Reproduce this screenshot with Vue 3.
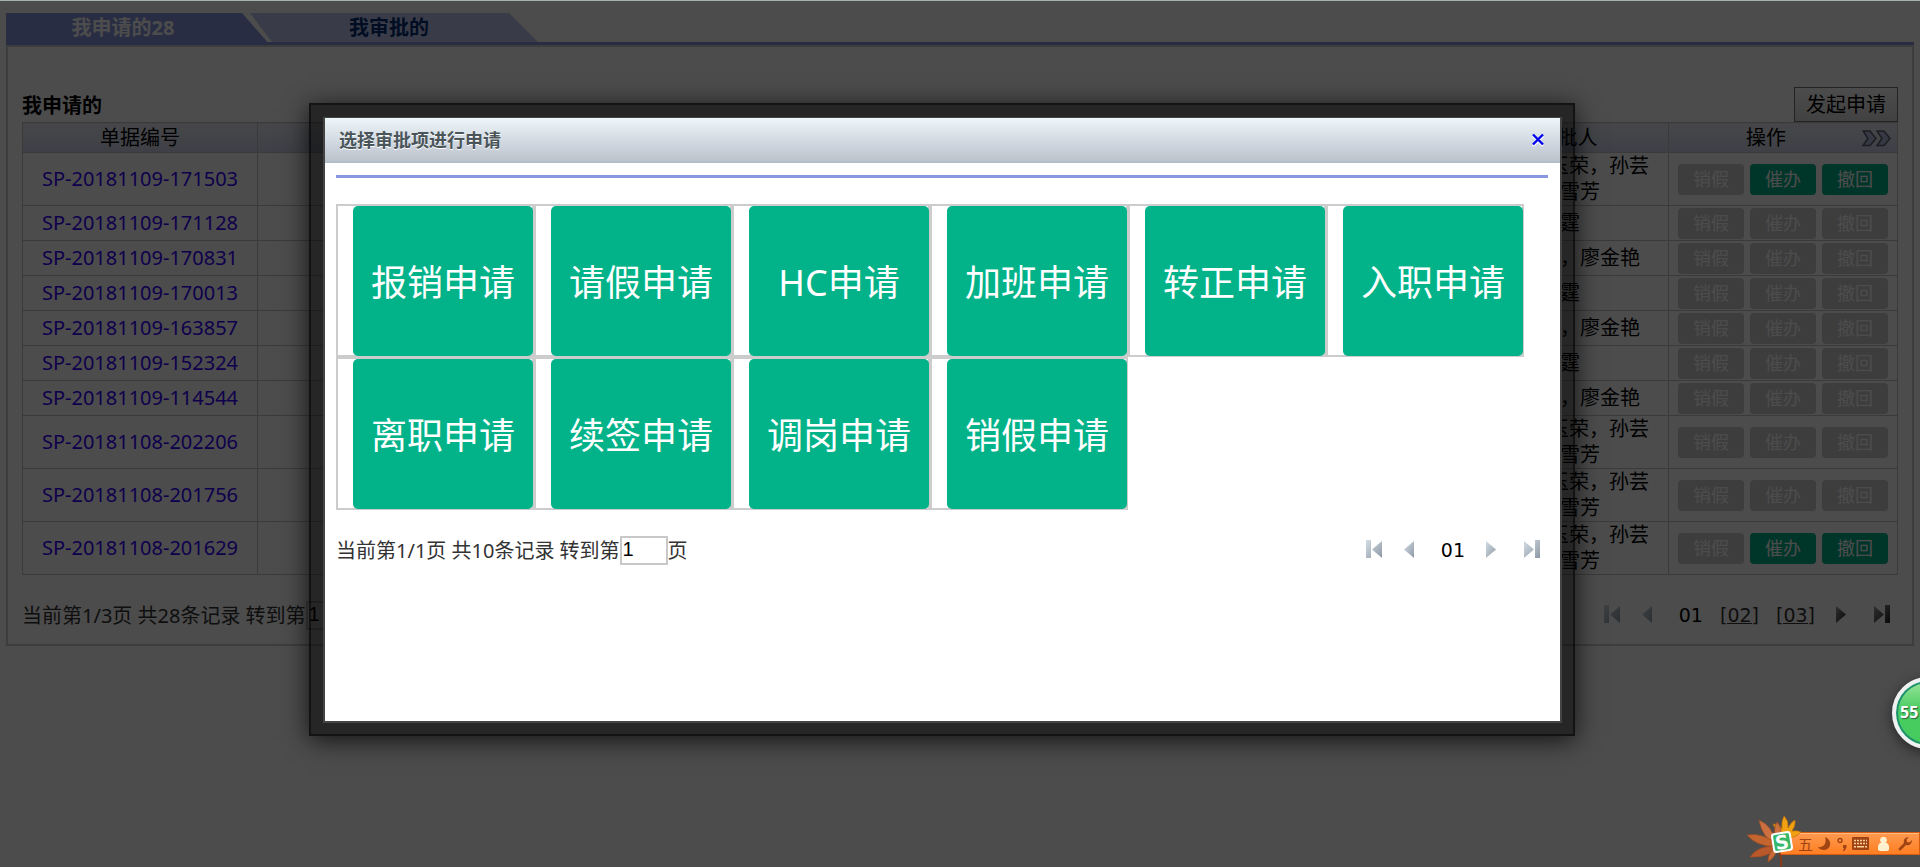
<script setup>
import { ref } from 'vue'

const people = { long: ['玉荣，孙芸', '雪芳'], one: ['霆'], two: ['，廖金艳'] }
const rows = [
  { id: 'SP-20181109-171503', who: 'long', active: true },
  { id: 'SP-20181109-171128', who: 'one', active: false },
  { id: 'SP-20181109-170831', who: 'two', active: false },
  { id: 'SP-20181109-170013', who: 'one', active: false },
  { id: 'SP-20181109-163857', who: 'two', active: false },
  { id: 'SP-20181109-152324', who: 'one', active: false },
  { id: 'SP-20181109-114544', who: 'two', active: false },
  { id: 'SP-20181108-202206', who: 'long', active: false },
  { id: 'SP-20181108-201756', who: 'long', active: false },
  { id: 'SP-20181108-201629', who: 'long', active: true },
]
const tiles = ['报销申请', '请假申请', 'HC申请', '加班申请', '转正申请', '入职申请', '离职申请', '续签申请', '调岗申请', '销假申请']
const listPage = ref('1')
const dialogPage = ref('1')
</script>

<template>
  <div class="page">
    <svg class="defs" aria-hidden="true">
      <defs>
        <linearGradient id="pale" x1="0" y1="0" x2="1" y2="1"><stop offset="0" stop-color="#d3dde5" /><stop offset="1" stop-color="#8f99a6" /></linearGradient>
        <linearGradient id="dark" x1="0" y1="0" x2="1" y2="1"><stop offset="0" stop-color="#a0a0a0" /><stop offset="1" stop-color="#202020" /></linearGradient>
      </defs>
    </svg>

    <main class="main">
      <nav class="tabs">
        <a class="tab current" href="#mine">我申请的28</a>
        <a class="tab other" href="#approve">我审批的</a>
      </nav>
      <section class="panel">
        <div class="panel-head">
          <h2>我申请的</h2>
          <button class="start" type="button">发起申请</button>
        </div>
        <table class="list">
          <colgroup><col class="c-id"><col><col class="c-who"><col class="c-op"></colgroup>
          <thead>
            <tr>
              <th>单据编号</th>
              <th></th>
              <th>审批人</th>
              <th>
                <div class="op-head">
                  <span>操作</span>
                  <svg width="30" height="17" viewBox="0 0 30 17">
                    <path d="M1 1h7l6 7.500-6 7H1l5-7zM15 1h7l6 7.500-6 7h-7l5-7z" fill="#b4bde0" stroke="#606070" stroke-width="1.500" />
                  </svg>
                </div>
              </th>
            </tr>
          </thead>
          <tbody>
            <tr v-for="r in rows" :key="r.id">
              <td class="id"><a href="#detail">{{ r.id }}</a></td>
              <td></td>
              <td class="who" :class="r.who"><span v-for="line in people[r.who]" :key="line">{{ line }}</span></td>
              <td>
                <div class="ops">
                  <button type="button" disabled>销假</button>
                  <button type="button" :disabled="!r.active">催办</button>
                  <button type="button" :disabled="!r.active">撤回</button>
                </div>
              </td>
            </tr>
          </tbody>
        </table>
        <div class="pager">
          <label>当前第1/3页 共28条记录 转到第<input v-model="listPage" type="text">页</label>
          <div class="nav">
            <a href="#first" aria-label="首页"><svg width="16" height="19" viewBox="0 0 16 19"><path d="M0 0h5v18H0zM16 1v17L6 9.500z" fill="url(#pale)" /></svg></a>
            <a class="prev" href="#prev" aria-label="上一页"><svg width="10" height="19" viewBox="0 0 10 19"><path d="M10 1v17L0 9.500z" fill="url(#pale)" /></svg></a>
            <b>01</b>
            <a class="num" href="#2">[02]</a>
            <a class="num" href="#3">[03]</a>
            <a class="next" href="#next" aria-label="下一页"><svg width="10" height="19" viewBox="0 0 10 19"><path d="M0 1v17l10-8.500z" fill="url(#dark)" /></svg></a>
            <a href="#last" aria-label="末页"><svg width="16" height="19" viewBox="0 0 16 19"><path d="M11 0h5v18h-5zM0 1v17l10-8.500z" fill="url(#dark)" /></svg></a>
          </div>
        </div>
      </section>
    </main>

    <div class="overlay">
      <div class="frame" role="dialog" aria-label="选择审批项进行申请">
        <div class="window">
          <header class="title">
            <h3>选择审批项进行申请</h3>
            <button type="button" class="close" aria-label="关闭">
              <svg width="12" height="14" viewBox="0 0 12 14"><path d="M1 3l10 10M11 3L1 13" stroke="#fff" stroke-width="2.400" /><path d="M1 1.500l10 10M11 1.500l-10 10" stroke="#0000ee" stroke-width="2.400" /></svg>
            </button>
          </header>
          <div class="body">
            <div class="rule"></div>
            <div class="tiles">
              <div v-for="t in tiles" :key="t" class="cell"><button type="button">{{ t }}</button></div>
            </div>
            <div class="pager">
              <label>当前第1/1页 共10条记录 转到第<input v-model="dialogPage" type="text">页</label>
              <div class="nav">
                <a href="#first" aria-label="首页"><svg width="16" height="19" viewBox="0 0 16 19"><path d="M0 0h5v18H0zM16 1v17L6 9.500z" fill="url(#pale)" /></svg></a>
                <a class="prev" href="#prev" aria-label="上一页"><svg width="10" height="19" viewBox="0 0 10 19"><path d="M10 1v17L0 9.500z" fill="url(#pale)" /></svg></a>
                <b>01</b>
                <a class="next" href="#next" aria-label="下一页"><svg width="10" height="19" viewBox="0 0 10 19"><path d="M0 1v17l10-8.500z" fill="url(#pale)" /></svg></a>
                <a href="#last" aria-label="末页"><svg width="16" height="19" viewBox="0 0 16 19"><path d="M11 0h5v18h-5zM0 1v17l10-8.500z" fill="url(#pale)" /></svg></a>
              </div>
            </div>
          </div>
        </div>
      </div>
    </div>

    <div class="ball"><span>55</span></div>

    <div class="ime">
      <svg class="leaf" width="64" height="57" viewBox="0 0 64 57">
        <g fill="#f0a010" stroke="#b86c08" stroke-width=".6">
          <path d="M46 28Q36 22 33 14q6 0 9 5-1-8 2-13 5 5 4 12 3-6 7-8 1 6-3 11 5-1 9 1-5 6-15 6z" />
        </g>
        <g stroke="#9c4a20" stroke-width=".7">
          <path d="M38 36Q22 28 19 10 32 16 35 30q-2-11 2-18 5 5 4 16z" fill="#cc7040" />
          <path d="M38 36Q18 38 7 25q18-3 31 11z" fill="#c4652f" />
          <path d="M38 36Q30 48 10 47q8-12 28-11z" fill="#b9582a" />
          <path d="M38 36q-1 10-10 16-1-10 10-16z" fill="#c86a38" />
        </g>
        <path d="M38 40q4 7 3 17" fill="none" stroke="#8a3c18" stroke-width="2" />
        <g transform="rotate(-9 42 32)">
          <rect x="32" y="22" width="20" height="20" rx="3" fill="#fff" />
          <rect x="34" y="24" width="16" height="16" rx="2" fill="#35b86a" />
          <text x="42" y="39" text-anchor="middle" class="s">S</text>
        </g>
      </svg>
      <div class="bar">
        <span>五</span>
        <svg class="moon" width="13" height="13" viewBox="0 0 13 13"><path d="M7 0c8 3 6 13-1 13-3 0-5-1-6-3 6 1 9-4 7-10z" /></svg>
        <svg class="punct" width="10" height="14" viewBox="0 0 10 14"><circle cx="3" cy="3.500" r="2" fill="none" stroke="#a04414" stroke-width="1.400" /><path d="M6 8h3.500v2.500L7.500 14H6l1-3H6z" /></svg>
        <svg class="kbd" width="17" height="13" viewBox="0 0 17 13"><rect width="17" height="13" rx="1" /><path d="M2 3.500h13M2 6.500h13" stroke="#ffcf9a" stroke-width="1.500" stroke-dasharray="2 1" /><path d="M2 9.700h2M5 9.700h7M13 9.700h2" stroke="#ffcf9a" stroke-width="1.500" /></svg>
        <svg class="user" width="11" height="14" viewBox="0 0 11 14"><path d="M5.500 0a3 3 0 0 1 2 5.500c2 .5 3.500 2 3.500 4.500v3l-2 1H2l-2-1v-3c0-2.500 1.500-4 3.500-4.500a3 3 0 0 1 2-5.500z" fill="#fff0d0" /></svg>
        <svg class="wrench" width="14" height="14" viewBox="0 0 14 14"><path d="M11 0L8.500 2.500l.5 2.500 2.500.5L14 3c0 4-3 6-6 5l-5.500 5.500a1.600 1.600 0 0 1-2-2L6 6c-1-3 1-6 5-6z" /></svg>
      </div>
    </div>
  </div>
</template>

<style>
body {
  margin: 0;
  background: #fff;
}
</style>

<style scoped>
.page {
  position: relative;
  min-height: 100vh;
  overflow: hidden;
  font-family: "Noto Sans", "Noto Sans CJK SC", sans-serif;
  font-size: 20px;
  line-height: 26px;
  color: #000;
}
.page * { box-sizing: border-box; }
button, input { font: inherit; margin: 0; padding: 0; }
h2, h3 { margin: 0; font-size: inherit; }
svg { display: block; }
.defs { position: absolute; width: 0; height: 0; }
.main { padding: 13px 6px 0; }

.tabs {
  display: flex;
  height: 32px;
  background: linear-gradient(#8897df, #8897df) bottom / 100% 3px no-repeat;
}
.tab {
  font-weight: 700;
  text-align: center;
  line-height: 30px;
  text-decoration: none;
}
.current {
  width: 264px;
  padding-right: 30px;
  color: #fff;
  background: #8897df;
  clip-path: polygon(0 0, 236px 0, 100% 100%, 0 100%);
}
.other {
  width: 288px;
  height: 29px;
  margin-left: -20px;
  padding-right: 10px;
  color: #002c74;
  background: #bfcaf0;
  clip-path: polygon(0 0, 259px 0, 100% 100%, 22px 100%);
}
.panel {
  border: 2px solid #ccc;
  padding: 40px 14px 14px;
}
.panel-head {
  display: flex;
  justify-content: space-between;
  align-items: flex-start;
  height: 35px;
}
.panel-head h2 { line-height: 37px; }
.start {
  width: 104px;
  height: 35px;
  border: 1px solid #777;
  background: linear-gradient(#fff, #dcdcdc);
}

.list {
  width: 100%;
  table-layout: fixed;
  border-collapse: collapse;
}
.c-id { width: 235px; }
.c-who { width: 202px; }
.c-op { width: 229px; }
.list th, .list td {
  border: 1px solid #c4c4c4;
  padding: 0;
}
.list th {
  height: 30px;
  font-weight: 400;
  line-height: 28px;
  background: linear-gradient(#eceef4, #cdd5ea);
}
.list td { height: 35px; }
.op-head {
  position: relative;
  padding-right: 34px;
}
.op-head svg {
  position: absolute;
  right: 5px;
  top: 6px;
}
.id { text-align: center; }
.id a { color: #3300ff; text-decoration: none; }
.list .who { padding-left: 93px; }
.who span { display: block; }
.list .long { padding-left: 82px; }
.long span + span { padding-left: 11px; }
.ops {
  display: flex;
  gap: 6px;
  padding-left: 9px;
}
.ops button {
  width: 66px;
  height: 31px;
  border: 0;
  border-radius: 4px;
  background: #02b38a;
  color: #fff;
  font-size: 18px;
  line-height: 30px;
}
.ops button:disabled { background: #ccc; }

.pager {
  display: flex;
  justify-content: space-between;
  align-items: flex-start;
  margin-top: 26px;
  color: #333;
}
.pager label {
  display: flex;
  align-items: center;
  height: 29px;
  line-height: 30px;
  white-space: pre;
}
.pager input {
  width: 48px;
  height: 29px;
  border: 2px solid #c8c8c8;
  padding: 0 1px 3px;
  background: #fff;
  font-family: "Liberation Sans", Arial, sans-serif;
  font-size: 20px;
}
.nav {
  display: flex;
  align-items: center;
  gap: 17px;
  height: 27px;
  padding-right: 8px;
  font-family: "DejaVu Sans", sans-serif;
  font-size: 19px;
}
.nav b { font-weight: 400; color: #000; }
.nav .prev { margin: 0 10px 0 5px; }
.nav .next { margin: 0 11px 0 4px; }
.num { color: #333; }

.overlay {
  position: absolute;
  inset: 0;
  padding: 102px 345px 0 309px;
  border-top: 1px solid #a8b0b0;
  background: rgba(0, 0, 0, .7);
  background-clip: padding-box;
}
.frame {
  padding: 12px 11px 11px 12px;
  border: 2px solid rgba(0, 0, 0, .75);
  background: rgba(0, 0, 0, .5);
  background-clip: padding-box;
  box-shadow: 0 4px 24px rgba(0, 0, 0, .75);
}
.window {
  border: solid #444;
  border-width: 1px 2px 2px;
  background: #fff;
}
.title {
  display: flex;
  justify-content: space-between;
  align-items: center;
  height: 45px;
  padding: 0 16px 0 14px;
  border-bottom: 2px solid #b2bec8;
  background: linear-gradient(#edf6f9, #cfd6df 60%, #bcc3cb);
  font-size: 18px;
  color: #4a555a;
  text-shadow: 0 1px 0 #fff;
}
.close { border: 0; background: none; }
.body {
  min-height: 558px;
  padding: 12px 12px 0 11px;
}
.rule { height: 3px; background: #8897df; }
.tiles {
  display: flex;
  flex-wrap: wrap;
  margin-top: 26px;
}
.cell {
  width: 198px;
  height: 153px;
  border: 2px solid #ccc;
  padding-left: 15px;
}
.cell button {
  width: 180px;
  height: 150px;
  padding-top: 3px;
  border: 0;
  border-radius: 5px;
  background: #02b38a;
  color: #fff;
  font-size: 36px;
}

.ball {
  position: absolute;
  right: -44px;
  top: 677px;
  width: 72px;
  height: 72px;
  border: 4px solid #eef0f2;
  border-radius: 50%;
  background: linear-gradient(#9be59b, #48cc62 45%, #45cc5c);
  box-shadow: 0 4px 14px rgba(0, 0, 0, .5), inset 0 0 0 2px #1f9070;
  color: #fff;
  font: 700 16px/62px "Open Sans", sans-serif;
  text-shadow: 1px 1px 1px #306040;
}
.ball span { padding-left: 4px; }

.ime {
  position: absolute;
  right: 0;
  bottom: 0;
  width: 180px;
  height: 57px;
}
.leaf {
  position: absolute;
  left: 0;
  top: 0;
  z-index: 1;
}
.s {
  font: 700 19px "DejaVu Sans", sans-serif;
  fill: #fff;
}
.bar {
  display: flex;
  align-items: center;
  height: 23px;
  margin: 22px 0 0 40px;
  padding-left: 17px;
  border: 1px solid #d85c10;
  box-shadow: inset 0 1px 0 #ffb880;
  background: linear-gradient(#ff9a50, #ff7e22);
  color: #a04414;
  font-size: 15px;
  line-height: 20px;
}
.bar svg { fill: #a04414; }
.moon { margin-left: 5px; }
.punct { margin-left: 6px; }
.kbd { margin-left: 5px; }
.user { margin-left: 9px; }
.wrench { margin-left: 9px; }
</style>
